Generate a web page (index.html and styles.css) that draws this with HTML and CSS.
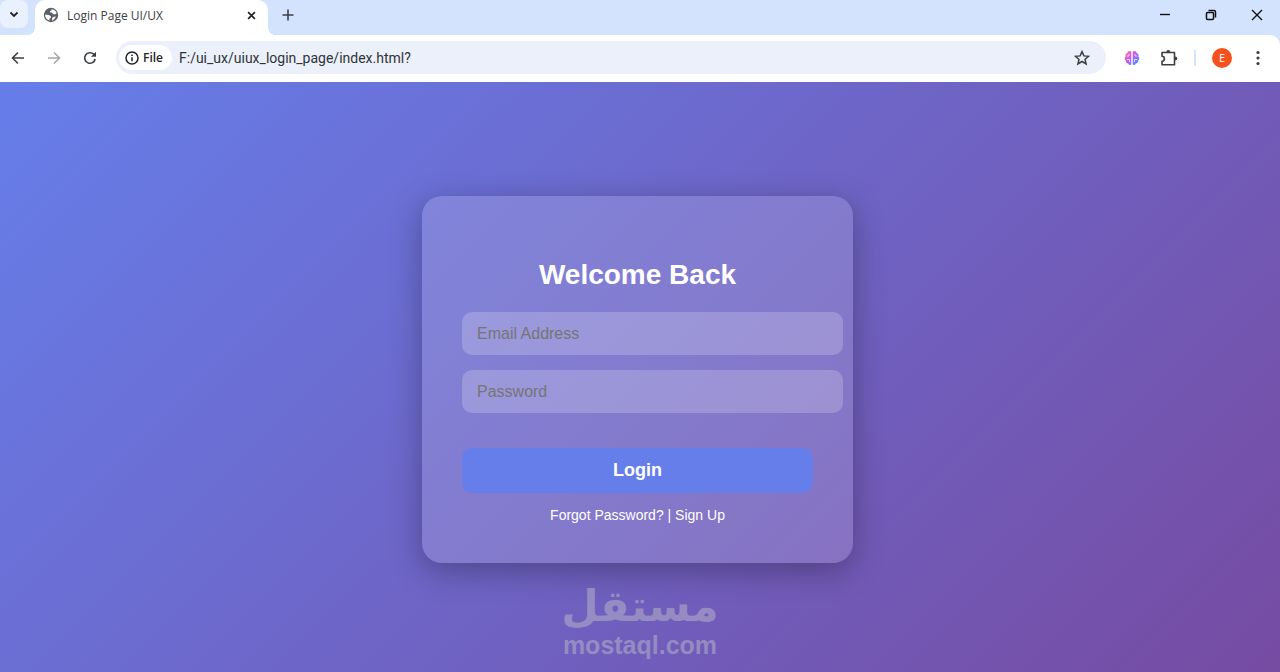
FILE: index.html
```html
<!DOCTYPE html>
<html lang="en">
<head>
    <meta charset="UTF-8" />
    <meta name="viewport" content="width=device-width, initial-scale=1.0"/>
    <title>Login Page UI/UX</title>
    <link rel="stylesheet" href="styles.css">
</head>
<body>
    <header class="browser">
        <div class="tab-strip">
            <button class="tab-search" aria-label="Search tabs">
                <svg width="10" height="10" viewBox="0 0 10 10"><path d="M1.5 3.5 L5 7 L8.5 3.5" fill="none" stroke="#1f2328" stroke-width="1.8"/></svg>
            </button>
            <div class="tab">
                <svg width="16" height="16" viewBox="0 0 16 16">
                    <circle cx="8" cy="8" r="7.2" fill="#5c6166"/>
                    <path d="M8.5 2.2 C10.5 2.2 13 3.6 13.7 6 L12 7.5 L10 7 L9 5.5 L7.3 5.6 L7 4 L8.5 3.6 Z M2.1 7.5 L5.5 8 L7.8 9 L8 10.5 L6.5 11.5 L6.5 13.6 C3.8 13 2 10.6 2.1 7.5 Z M10 10 L12.8 9.6 C12 11.8 10.8 13 9 13.7 L9 11.8 Z" fill="#fff"/>
                </svg>
                <span class="tab-title">Login Page UI/UX</span>
                <button class="tab-close" aria-label="Close tab">
                    <svg width="9" height="9" viewBox="0 0 10 10"><path d="M1.2 1.2 L8.8 8.8 M8.8 1.2 L1.2 8.8" stroke="#1f2328" stroke-width="1.8"/></svg>
                </button>
            </div>
            <button class="new-tab" aria-label="New tab">
                <svg width="12" height="12" viewBox="0 0 12 12"><path d="M6 0.5 V11.5 M0.5 6 H11.5" stroke="#3c4043" stroke-width="1.6"/></svg>
            </button>
            <div class="window-controls">
                <button aria-label="Minimize">
                    <svg width="12" height="12" viewBox="0 0 12 12"><path d="M1 5.5 H11" stroke="#111" stroke-width="1.4"/></svg>
                </button>
                <button aria-label="Restore">
                    <svg width="12" height="12" viewBox="0 0 12 12" fill="none" stroke="#111" stroke-width="1.5"><rect x="1.5" y="3.5" width="7" height="7" rx="1"/><path d="M3.5 1.5 H9 Q10.5 1.5 10.5 3 V8.5"/></svg>
                </button>
                <button aria-label="Close">
                    <svg width="12" height="12" viewBox="0 0 12 12"><path d="M1 1 L11 11 M11 1 L1 11" stroke="#111" stroke-width="1.4"/></svg>
                </button>
            </div>
        </div>

        <div class="toolbar">
            <div class="nav">
                <button aria-label="Back">
                    <svg width="14" height="14" viewBox="0 0 14 14" fill="none" stroke="#3c4043" stroke-width="1.6"><path d="M13 7 H1.8 M7 1.5 L1.5 7 L7 12.5"/></svg>
                </button>
                <button aria-label="Forward">
                    <svg width="14" height="14" viewBox="0 0 14 14" fill="none" stroke="#a5a8ab" stroke-width="1.6"><path d="M1 7 H12.2 M7 1.5 L12.5 7 L7 12.5"/></svg>
                </button>
                <button aria-label="Reload">
                    <svg width="14" height="14" viewBox="0 0 14 14"><path d="M12.2 8 A5.3 5.3 0 1 1 10.8 3.3 L12 4.5" fill="none" stroke="#3c4043" stroke-width="1.6"/><path d="M13 0.8 V5.8 H8 Z" fill="#3c4043"/></svg>
                </button>
            </div>
            <div class="address">
                <button class="scheme">
                    <svg width="14" height="14" viewBox="0 0 14 14" fill="none" stroke="#1f2328" stroke-width="1.5"><circle cx="7" cy="7" r="6"/><path d="M7 6.2 V10.3 M7 3.5 V5"/></svg>
                    File
                </button>
                <input class="url" type="text" aria-label="Address" value="F:/ui_ux/uiux_login_page/index.html?">
                <button class="star" aria-label="Bookmark">
                    <svg width="16" height="16" viewBox="0 0 16 16"><path d="M8 1.6 L9.9 5.9 L14.5 6.3 L11 9.4 L12.1 14 L8 11.5 L3.9 14 L5 9.4 L1.5 6.3 L6.1 5.9 Z" fill="none" stroke="#3c4043" stroke-width="1.5"/></svg>
                </button>
            </div>
            <div class="extensions">
                <button class="brain" aria-label="Brain extension">
                    <svg width="16" height="16" viewBox="0 0 16 16">
                        <defs>
                            <linearGradient id="brain" x1="0" y1="0" x2="1" y2="1">
                                <stop offset="0.1" stop-color="#ff6a9c"/>
                                <stop offset="0.5" stop-color="#b95cf5"/>
                                <stop offset="0.9" stop-color="#3b9cff"/>
                            </linearGradient>
                        </defs>
                        <path d="M7.3 1.5 C5.5 0.3 3.5 1.3 3.3 3 C1.5 3.6 1 5.3 1.7 6.6 C0.2 7.6 0.4 9.8 1.8 10.5 C1.6 12.5 3 13.5 4.2 13.5 C5 15.3 6.5 15.2 7.3 14.5 Z M8.7 1.5 C10.5 0.3 12.5 1.3 12.7 3 C14.5 3.6 15 5.3 14.3 6.6 C15.8 7.6 15.6 9.8 14.2 10.5 C14.4 12.5 13 13.5 11.8 13.5 C11 15.3 9.5 15.2 8.7 14.5 Z" fill="url(#brain)"/>
                        <path d="M3 6 H5 V4 M2.8 9.5 H5.5 V12 M13 6 H11 V4 M13.2 9.5 H10.5 V12" fill="none" stroke="#f3dcff" stroke-width="0.9"/>
                    </svg>
                </button>
                <button aria-label="Extensions">
                    <svg width="18" height="18" viewBox="0 0 18 18"><path d="M2 3.5 H14.5 V15.8 H2 V12.2 C5.2 12.2 5.2 7.2 2 7.2 Z" fill="none" stroke="#3c4043" stroke-width="1.6" stroke-linejoin="round"/><path d="M6.3 3.2 A2 2.3 0 0 1 10.3 3.2 Z M15 7.5 A2.3 2 0 0 1 15 11.6 Z" fill="#3c4043"/></svg>
                </button>
                <span class="divider"></span>
                <button class="avatar" aria-label="Profile">E</button>
                <button class="menu" aria-label="Menu">
                    <svg width="4" height="16" viewBox="0 0 4 16" fill="#3c4043"><circle cx="2" cy="2.5" r="1.6"/><circle cx="2" cy="8" r="1.6"/><circle cx="2" cy="13.5" r="1.6"/></svg>
                </button>
            </div>
        </div>
    </header>

    <main class="page">
        <form class="login-container">
            <h2>Welcome Back</h2>
            <input class="field" type="email" placeholder="Email Address" aria-label="Email Address">
            <input class="field" type="password" placeholder="Password" aria-label="Password">
            <button class="login-btn" type="submit">Login</button>
            <p class="links"><a href="#">Forgot Password?</a> | <a href="#">Sign Up</a></p>
        </form>
        <div class="watermark">
            <span class="watermark-ar" lang="ar" dir="rtl">مستقل</span>
            <span class="watermark-en">mostaql.com</span>
        </div>
    </main>
</body>
</html>
```
FILE: styles.css
```css
* {
    box-sizing: border-box;
}

body {
    margin: 0;
    min-height: 100vh;
    display: flex;
    flex-direction: column;
    font-family: "Liberation Sans", Arial, sans-serif;
}

button {
    display: flex;
    align-items: center;
    justify-content: center;
    padding: 0;
    border: none;
    background: none;
    cursor: pointer;
}

/* Browser bar */
.browser {
    background-color: #d3e3fd;
    font-family: "Open Sans", "Noto Sans", sans-serif;
}

.tab-strip {
    display: flex;
    height: 35px;
}

.tab-search {
    width: 28px;
    height: 28px;
    margin-right: 7px;
    border-radius: 8px;
    background-color: #e9f1fe;
}

.tab {
    position: relative;
    display: flex;
    align-items: center;
    gap: 8px;
    width: 233px;
    padding: 0 12px 5px 8px;
    border-radius: 10px 10px 0 0;
    background-color: #fff;
}

.tab::before,
.tab::after {
    content: "";
    position: absolute;
    bottom: 0;
    width: 8px;
    height: 8px;
}

.tab::before {
    right: 100%;
    background: radial-gradient(circle at 0 0, transparent 8px, #fff 8px);
}

.tab::after {
    left: 100%;
    background: radial-gradient(circle at 100% 0, transparent 8px, #fff 8px);
}

.tab-title {
    flex: 1;
    font-size: 12px;
    color: #3c4043;
}

.new-tab {
    width: 40px;
    height: 30px;
}

.window-controls {
    display: flex;
    margin-left: auto;
}

.window-controls button {
    width: 46px;
    height: 29px;
}

.toolbar {
    display: flex;
    align-items: center;
    height: 47px;
    padding: 0 12px 2px 0;
    border-radius: 0 10px 0 0;
    background-color: #fff;
}

.nav {
    display: flex;
    padding-right: 8px;
}

.nav button {
    width: 36px;
    height: 34px;
}

.address {
    display: flex;
    flex: 1;
    align-items: center;
    height: 33px;
    padding: 0 16px 0 3px;
    border-radius: 17px;
    background-color: #ebf0fa;
}

.scheme {
    gap: 4px;
    height: 25px;
    padding: 0 9px 0 6px;
    border-radius: 13px;
    background-color: #fff;
    color: #1f2328;
    font: 600 12px "Open Sans", sans-serif;
}

.url {
    flex: 1;
    min-width: 0;
    padding: 0 7px;
    border: none;
    outline: none;
    background: none;
    color: #303438;
    font: 14px Roboto, sans-serif;
}

.extensions {
    display: flex;
    align-items: center;
    gap: 16px;
    padding-left: 14px;
}

.brain {
    width: 24px;
}

.divider {
    width: 2px;
    height: 16px;
    background-color: #d3e3fd;
}

.avatar {
    width: 20px;
    height: 20px;
    border-radius: 50%;
    background-color: #f4511e;
    color: #fff;
    font: 11px "Open Sans", sans-serif;
}

.menu {
    width: 20px;
}

/* Login page */
.page {
    position: relative;
    flex: 1;
    display: flex;
    justify-content: center;
    align-items: center;
    padding: 5px 5px 0 0;
    background: linear-gradient(135deg, #667eea, #764ba2);
}

.login-container {
    width: 431px;
    padding: 40px;
    border-radius: 20px;
    background-color: rgba(255, 255, 255, 0.15);
    box-shadow: 0 8px 32px rgba(0, 0, 0, 0.3);
    color: #fff;
    text-align: center;
}

h2 {
    margin: 22px 0 20px;
    font-size: 28px;
    line-height: 34px;
}

.field {
    display: block;
    width: calc(100% + 30px);
    height: 43px;
    margin-bottom: 15px;
    padding: 0 15px;
    border: none;
    border-radius: 10px;
    outline: none;
    background-color: rgba(255, 255, 255, 0.2);
    color: #fff;
    font: 16px "Liberation Sans", Arial, sans-serif;
}

.field::placeholder {
    color: #757575;
}

.login-btn {
    width: 100%;
    height: 45px;
    margin-top: 35px;
    border-radius: 10px;
    background-color: #667eea;
    color: #fff;
    font: bold 18px "Liberation Sans", Arial, sans-serif;
}

.links {
    margin: 14px 0 0;
    font-size: 14px;
    line-height: 16px;
}

.links a {
    color: #fff;
    text-decoration: none;
}

/* Site mark over the page */
.watermark {
    position: absolute;
    right: 0;
    bottom: 12px;
    left: 0;
    display: flex;
    flex-direction: column;
    align-items: center;
    color: #aaa5c6;
    opacity: 0.65;
    font-weight: bold;
    pointer-events: none;
}

.watermark-ar {
    font-family: "DejaVu Sans", sans-serif;
    font-size: 43px;
    line-height: 50px;
}

.watermark-en {
    font-size: 25px;
    line-height: 29px;
}
```
